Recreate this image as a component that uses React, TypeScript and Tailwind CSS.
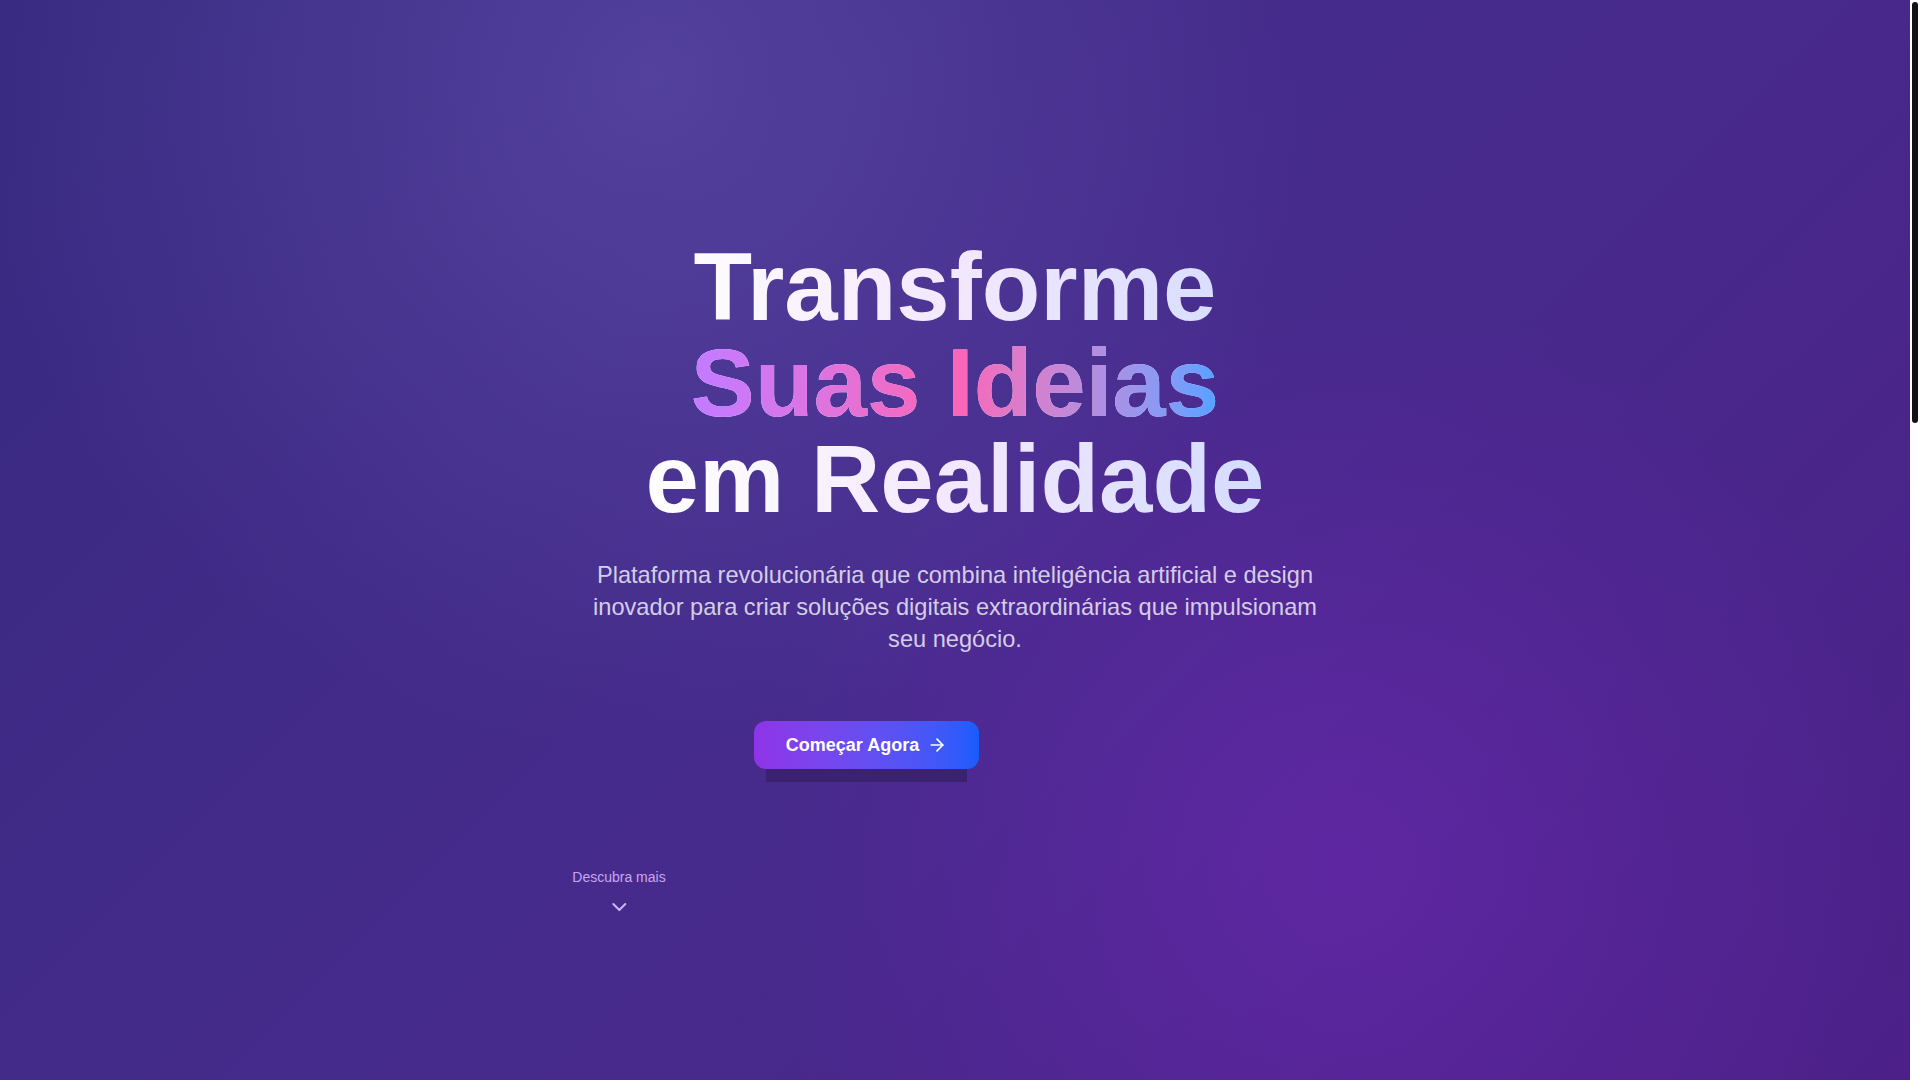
import { ArrowRight, ChevronDown } from 'lucide-react';

export default function App() {
  return (
    <div className="flex h-screen overflow-hidden font-['Liberation_Sans',Arial,sans-serif]">
      <main className="min-w-0 flex-1 overflow-hidden">
        {/* Hero */}
        <section className="relative min-h-screen overflow-hidden bg-[radial-gradient(circle_at_34%_7%,rgba(125,112,205,0.32),transparent_42%),radial-gradient(circle_at_70%_80%,rgba(120,40,190,0.45),transparent_36%),linear-gradient(135deg,#372a80,#462b8c_50%,#4c2088)]">
          <div className="flex flex-col items-center pt-[239px] text-center">
            <h1 className="w-fit text-8xl font-bold leading-none bg-gradient-to-r from-white via-purple-100 to-[#d4dcff] bg-clip-text text-transparent">
              <span className="block">Transforme</span>
              <span className="mx-auto block w-fit bg-gradient-to-r from-purple-400 via-pink-400 to-blue-400 bg-clip-text text-transparent">
                Suas Ideias
              </span>
              <span className="block">em Realidade</span>
            </h1>

            <p className="mt-8 max-w-3xl text-[23.6px] leading-8 text-[#d4cde6]">
              Plataforma revolucionária que combina inteligência artificial e design inovador para criar soluções digitais extraordinárias que impulsionam seu negócio.
            </p>

            <div className="mt-[66px] flex gap-4">
              <div className="relative">
                <div className="absolute left-3 right-3 top-full h-[13px] bg-[#3b2270]" />
                <button className="relative flex h-12 items-center gap-2 rounded-xl bg-gradient-to-r from-[#8f34e8] to-blue-600 px-8 text-lg font-semibold text-white">
                  Começar Agora
                  <ArrowRight className="h-5 w-5" />
                </button>
              </div>
              <div className="invisible h-12 w-[161px]" />
            </div>
          </div>

          {/* Scroll indicator */}
          <div className="absolute left-[619px] top-[867px] flex -translate-x-1/2 flex-col items-center">
            <span className="text-sm text-[#c9a6f5]">Descubra mais</span>
            <ChevronDown className="mt-2 h-6 w-6 text-[#d3b2f8]" />
          </div>
        </section>
      </main>

      {/* Scrollbar */}
      <div className="w-[10px] shrink-0 bg-white">
        <div className="mx-[2px] mt-[2px] h-[421px] rounded-[3px] bg-[#111111]" />
      </div>
    </div>
  );
}
